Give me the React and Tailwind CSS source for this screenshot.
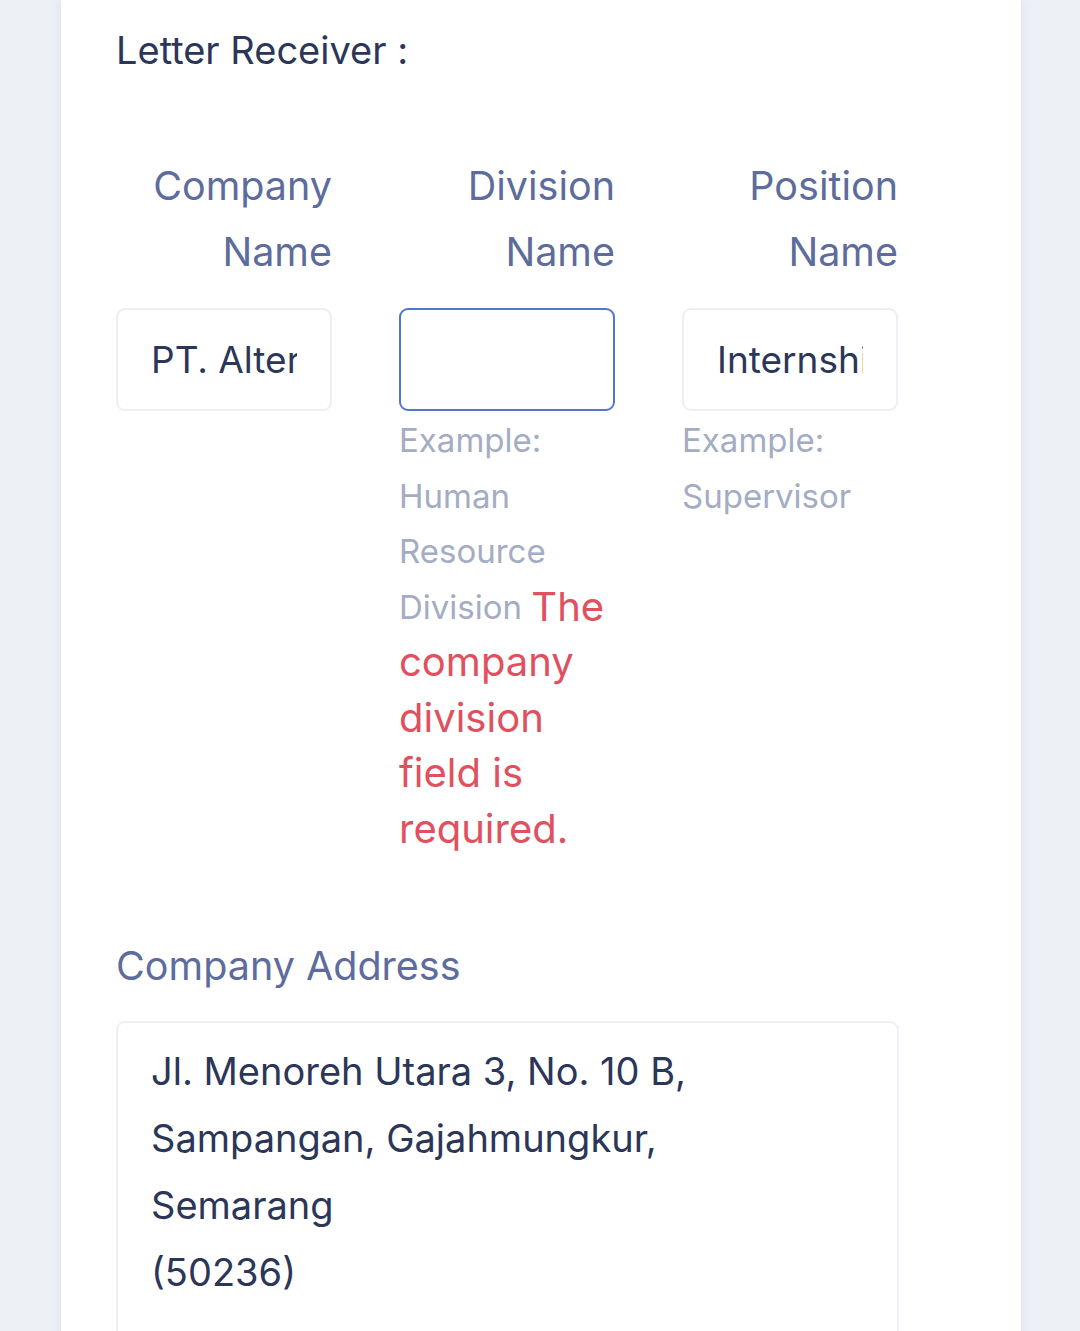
export default function App() {
  const font = { fontFamily: 'Inter, "Noto Sans", sans-serif' }
  return (
    <div className="h-[1331px] overflow-hidden bg-[#edf0f5]" style={font}>
      <div className="ml-[61px] w-[960px] min-h-[1400px] bg-white pl-[55px] pt-[24px] shadow-[0_0_12px_rgba(40,50,90,0.08)]">
        <h3 className="text-[38px] leading-[52px] text-[#2b3658]">Letter Receiver :</h3>

        <div className="mt-[77px] flex w-[782px] gap-[67px]">
          {/* Company */}
          <div className="w-[216px] shrink-0">
            <label className="block text-right text-[39.5px] leading-[66px] text-[#5d6c9c]">Company Name</label>
            <input
              readOnly
              value="PT. Alter"
              className="mt-[23px] h-[103px] w-full rounded-[9px] border-2 border-[#edeff5] px-[33px] text-[37px] text-[#2b3658] outline-none"
            />
          </div>

          {/* Division */}
          <div className="w-[216px] shrink-0">
            <label className="block text-right text-[39.5px] leading-[66px] text-[#5d6c9c]">Division Name</label>
            <input
              readOnly
              value=""
              className="mt-[23px] h-[103px] w-full rounded-[9px] border-2 border-[#5275d0] px-[33px] text-[37px] text-[#2b3658] outline-none"
            />
            <div className="mt-[2px] text-[33px] leading-[55.5px]">
              <span className="text-[#a4acc4]">Example: Human Resource Division</span>{' '}
              <span className="relative top-[2px] text-[40px] leading-[40px] text-[#e0505e]">
                The company division field is required.
              </span>
            </div>
          </div>

          {/* Position */}
          <div className="w-[216px] shrink-0">
            <label className="block text-right text-[39.5px] leading-[66px] text-[#5d6c9c]">Position Name</label>
            <input
              readOnly
              value="Internship"
              className="mt-[23px] h-[103px] w-full rounded-[9px] border-2 border-[#edeff5] px-[33px] text-[37px] text-[#2b3658] outline-none"
            />
            <div className="mt-[2px] text-[33px] leading-[55.5px] text-[#a4acc4]">Example: Supervisor</div>
          </div>
        </div>

        <label className="mt-[76px] block text-[39.5px] leading-[66px] text-[#5d6c9c]">Company Address</label>
        <div className="mt-[22px] h-[400px] w-[783px] rounded-[9px] border-2 border-[#edeff5] px-[33px] pt-[15px] text-[38px] leading-[67px] text-[#2b3658]">
          Jl. Menoreh Utara 3, No. 10 B,
          <br />
          Sampangan, Gajahmungkur,
          <br />
          Semarang
          <br />
          (50236)
        </div>
      </div>
    </div>
  )
}
